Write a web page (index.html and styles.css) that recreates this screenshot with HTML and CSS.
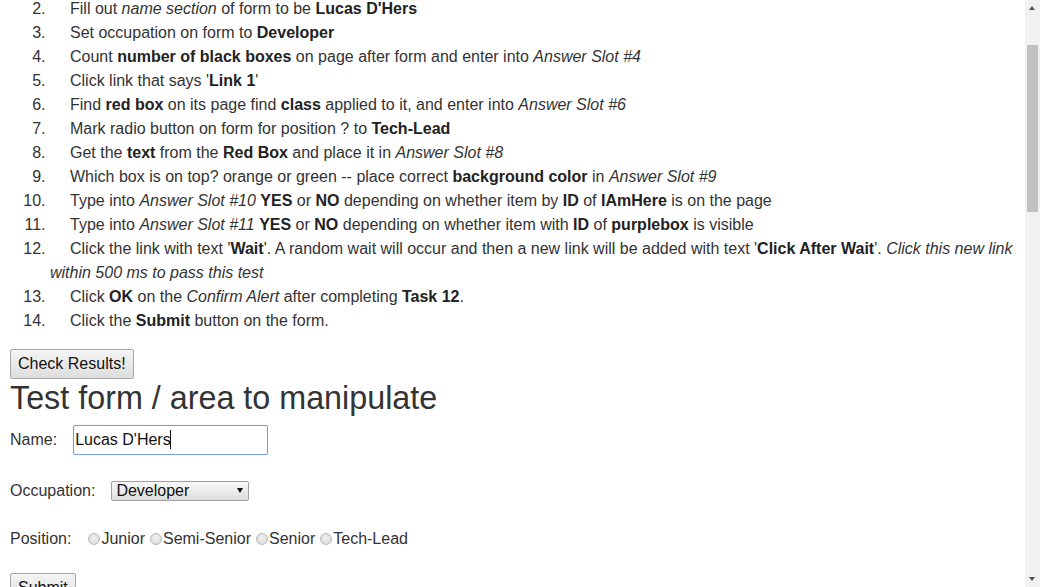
FILE: index.html
```html
<!DOCTYPE html>
<html>
<head>
<meta charset="utf-8">
<title>Test page</title>
<link rel="stylesheet" href="styles.css">
</head>
<body>
<div class="page">
  <main class="content">
    <ol class="tasks" start="2">
      <li>Fill out <i>name section</i> of form to be <b>Lucas D'Hers</b></li>
      <li>Set occupation on form to <b>Developer</b></li>
      <li>Count <b>number of black boxes</b> on page after form and enter into <i>Answer Slot #4</i></li>
      <li>Click link that says '<b>Link 1</b>'</li>
      <li>Find <b>red box</b> on its page find <b>class</b> applied to it, and enter into <i>Answer Slot #6</i></li>
      <li>Mark radio button on form for position ? to <b>Tech-Lead</b></li>
      <li>Get the <b>text</b> from the <b>Red Box</b> and place it in <i>Answer Slot #8</i></li>
      <li>Which box is on top? orange or green -- place correct <b>background color</b> in <i>Answer Slot #9</i></li>
      <li>Type into <i>Answer Slot #10</i> <b>YES</b> or <b>NO</b> depending on whether item by <b>ID</b> of <b>IAmHere</b> is on the page</li>
      <li>Type into <i>Answer Slot #11</i> <b>YES</b> or <b>NO</b> depending on whether item with <b>ID</b> of <b>purplebox</b> is visible</li>
      <li>Click the link with text '<b>Wait</b>'. A random wait will occur and then a new link will be added with text '<b>Click After Wait</b>'. <i>Click this new link within 500 ms to pass this test</i></li>
      <li>Click <b>OK</b> on the <i>Confirm Alert</i> after completing <b>Task 12</b>.</li>
      <li>Click the <b>Submit</b> button on the form.</li>
    </ol>
    <button class="btn" type="button">Check Results!</button>
    <h1 class="title">Test form / area to manipulate</h1>
    <form class="form">
      <div class="row row-name">
        <label class="lbl" for="name">Name:</label>
        <span class="input-wrap">
          <input class="text-input" id="name" type="text" value="Lucas D'Hers">
          <span class="caret"></span>
        </span>
      </div>
      <div class="row row-occ">
        <label class="lbl" for="occ">Occupation:</label>
        <span class="select-wrap">
          <select class="select" id="occ">
            <option>Developer</option>
          </select>
        </span>
      </div>
      <div class="row row-pos">
        <span class="lbl lbl-pos">Position:</span>
        <label class="radio-opt"><input type="radio" name="pos" class="radio">Junior</label>
        <label class="radio-opt"><input type="radio" name="pos" class="radio">Semi-Senior</label>
        <label class="radio-opt"><input type="radio" name="pos" class="radio">Senior</label>
        <label class="radio-opt"><input type="radio" name="pos" class="radio">Tech-Lead</label>
      </div>
      <div class="row row-submit">
        <button class="btn" type="button">Submit</button>
      </div>
    </form>
  </main>
  <div class="scrollbar">
    <div class="sb-arrow sb-up"></div>
    <div class="sb-track">
      <div class="sb-thumb"></div>
    </div>
    <div class="sb-arrow sb-down"></div>
  </div>
</div>
</body>
</html>
```
FILE: styles.css
```css
html, body {
  margin: 0;
  padding: 0;
  height: 587px;
  overflow: hidden;
  background: #fff;
}

body {
  font-family: "Liberation Sans", Arial, sans-serif;
  font-size: 16px;
  color: #333;
}

.page {
  display: flex;
  height: 587px;
}

.content {
  flex: 1;
  min-width: 0;
  padding: 0 10px;
  overflow: hidden;
}

.tasks {
  margin: -3px 0 16px 0;
  padding-left: 40px;
  line-height: 24px;
}

.tasks li {
  text-indent: 20px;
}

.tasks b {
  font-weight: bold;
  color: #222;
}

.btn {
  display: block;
  font-family: "Liberation Sans", Arial, sans-serif;
  font-size: 16px;
  color: #111;
  padding: 5px 7px;
  line-height: 18px;
  border: 1px solid #a6a6a6;
  border-radius: 2px;
  background: linear-gradient(#f4f4f4, #dedede);
  margin: 0;
}

.title {
  font-size: 32.3px;
  font-weight: normal;
  line-height: 39px;
  margin: 0 0 7px 0;
  color: #333;
}

.form {
  display: flex;
  flex-direction: column;
}

.row {
  display: flex;
  align-items: center;
  min-height: 24px;
}

.row-occ {
  margin-top: 24px;
}

.row-pos {
  margin-top: 24px;
}

.row-submit {
  margin-top: 22px;
}

.lbl {
  margin-right: 16px;
}

.lbl-pos {
  margin-right: 16px;
}

.input-wrap {
  position: relative;
  display: inline-block;
  line-height: 0;
}

.text-input {
  width: 195px;
  height: 30px;
  box-sizing: border-box;
  border: 1px solid #7b9fd8;
  border-radius: 2px;
  box-shadow: 0 0 1px #a9c1ea;
  padding: 0 1px;
  font-family: "Liberation Sans", Arial, sans-serif;
  font-size: 16px;
  color: #111;
  outline: none;
  margin: 0;
}

.caret {
  position: absolute;
  left: 97px;
  top: 5px;
  width: 1px;
  height: 19px;
  background: #111;
}

.select-wrap {
  position: relative;
  display: inline-block;
  line-height: 0;
}

.select {
  appearance: none;
  -webkit-appearance: none;
  width: 138px;
  height: 20px;
  box-sizing: border-box;
  border: 1px solid #a0a0a0;
  border-radius: 2px;
  background: linear-gradient(#f8f8f8, #dedede);
  font-family: "Liberation Sans", Arial, sans-serif;
  font-size: 16px;
  color: #111;
  padding: 0 4px;
  margin: 0;
  line-height: 18px;
}

.select-wrap::after {
  content: "";
  position: absolute;
  right: 6px;
  top: 7px;
  border-left: 3px solid transparent;
  border-right: 3px solid transparent;
  border-top: 5px solid #111;
  pointer-events: none;
}

.radio-opt {
  display: inline-flex;
  align-items: center;
  margin-right: 4px;
}

.radio {
  appearance: none;
  -webkit-appearance: none;
  width: 12px;
  height: 12px;
  box-sizing: border-box;
  border-radius: 50%;
  border: 1px solid #b8b8b8;
  background: radial-gradient(circle at 50% 40%, #f0f0f0, #d8d8d8);
  margin: 0 1px 1px 1px;
}

.scrollbar {
  width: 15px;
  flex: none;
  background: #f1f1f1;
  display: flex;
  flex-direction: column;
  align-items: center;
}

.sb-arrow {
  height: 17px;
  width: 15px;
  flex: none;
  position: relative;
}

.sb-up::after,
.sb-down::after {
  content: "";
  position: absolute;
  left: 4px;
  border-left: 3.5px solid transparent;
  border-right: 3.5px solid transparent;
}

.sb-up::after {
  top: 6px;
  border-bottom: 4px solid #505050;
}

.sb-down::after {
  bottom: 6px;
  border-top: 4px solid #505050;
}

.sb-track {
  flex: 1;
  width: 100%;
  display: flex;
  justify-content: center;
  padding-top: 28px;
}

.sb-thumb {
  width: 11px;
  height: 167px;
  background: #c1c1c1;
}
```
